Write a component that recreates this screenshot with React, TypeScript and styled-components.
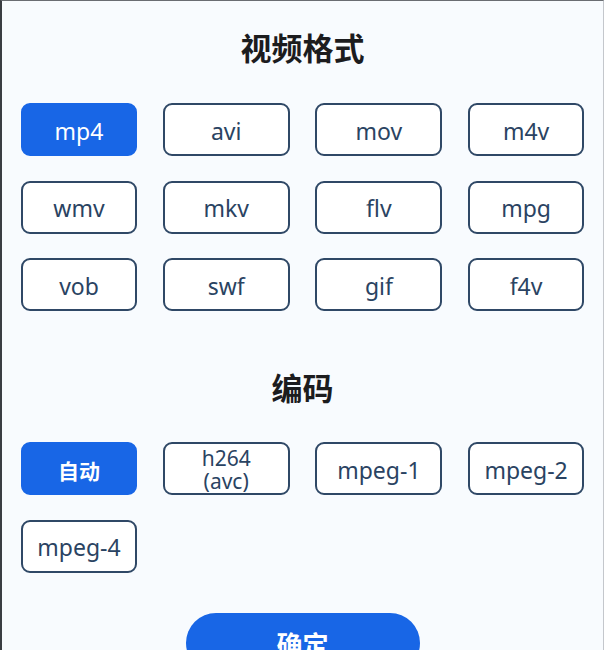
import React, { useState } from "react";
import styled, { createGlobalStyle } from "styled-components";

const GlobalStyle = createGlobalStyle`
  html, body {
    margin: 0;
    padding: 0;
    background: #f8fbfe;
  }
  body {
    font-family: "Noto Sans", "Noto Sans CJK SC", sans-serif;
  }
`;

const Screen = styled.div`
  box-sizing: border-box;
  width: 604px;
  height: 650px;
  overflow: hidden;
  background: #f8fbfe;
  border-left: 2px solid #3a3d42;
  border-top: 1px solid #6a6d72;
  border-right: 1px solid #c4c7cc;
  padding: 27px 0 0 19px;
  display: flex;
  flex-direction: column;
`;

const SectionTitle = styled.h2<{ $gapTop?: number }>`
  margin: ${(p) => p.$gapTop ?? 0}px 0 0 0;
  width: 563px;
  text-align: center;
  font-family: "Noto Sans CJK SC", "Noto Sans", sans-serif;
  font-size: 31px;
  line-height: 38px;
  font-weight: 700;
  color: #1c1c1e;
`;

const OptionGrid = styled.div<{ $gapTop: number }>`
  margin-top: ${(p) => p.$gapTop}px;
  display: grid;
  grid-template-columns: 116px 127px 127px 116px;
  grid-auto-rows: 53px;
  column-gap: 25.7px;
  row-gap: 24.5px;
`;

const OptionButton = styled.button<{ $active: boolean }>`
  box-sizing: border-box;
  height: 53px;
  padding: 2px 0 0 0;
  border-radius: 9px;
  border: 2px solid ${(p) => (p.$active ? "#1866e6" : "#2f4866")};
  background: ${(p) => (p.$active ? "#1866e6" : "#ffffff")};
  color: ${(p) => (p.$active ? "#ffffff" : "#2a4362")};
  font-family: "Noto Sans", "Noto Sans CJK SC", sans-serif;
  font-size: 23px;
  font-weight: 400;
  display: flex;
  flex-direction: column;
  align-items: center;
  justify-content: center;
  cursor: pointer;
`;

const CjkLabel = styled.span`
  font-family: "Noto Sans CJK SC", sans-serif;
  font-size: 21px;
  font-weight: 700;
`;

const TwoLine = styled.span`
  font-size: 21px;
  line-height: 23px;
  white-space: pre-line;
`;

const ConfirmRow = styled.div`
  width: 563px;
  margin-top: 40px;
  display: flex;
  justify-content: center;
`;

const ConfirmButton = styled.button`
  width: 234px;
  height: 60px;
  border: none;
  border-radius: 30px;
  background: #1866e6;
  color: #ffffff;
  font-family: "Noto Sans CJK SC", sans-serif;
  font-size: 26px;
  font-weight: 700;
  padding: 12px 0 0 0;
  display: flex;
  justify-content: center;
  align-items: flex-start;
`;

const formats = ["mp4", "avi", "mov", "m4v", "wmv", "mkv", "flv", "mpg", "vob", "swf", "gif", "f4v"];
const codecs = ["自动", "h264\n(avc)", "mpeg-1", "mpeg-2", "mpeg-4"];

export default function App() {
  const [format, setFormat] = useState("mp4");
  const [codec, setCodec] = useState("自动");

  return (
    <>
      <GlobalStyle />
      <Screen>
        <SectionTitle>视频格式</SectionTitle>
        <OptionGrid $gapTop={37}>
          {formats.map((f) => (
            <OptionButton key={f} $active={format === f} onClick={() => setFormat(f)}>
              {f}
            </OptionButton>
          ))}
        </OptionGrid>

        <SectionTitle $gapTop={57}>编码</SectionTitle>
        <OptionGrid $gapTop={36}>
          {codecs.map((c) => (
            <OptionButton key={c} $active={codec === c} onClick={() => setCodec(c)}>
              {c === "自动" ? (
                <CjkLabel>{c}</CjkLabel>
              ) : c.includes("\n") ? (
                <TwoLine>{c}</TwoLine>
              ) : (
                c
              )}
            </OptionButton>
          ))}
        </OptionGrid>

        <ConfirmRow>
          <ConfirmButton>确定</ConfirmButton>
        </ConfirmRow>
      </Screen>
    </>
  );
}
